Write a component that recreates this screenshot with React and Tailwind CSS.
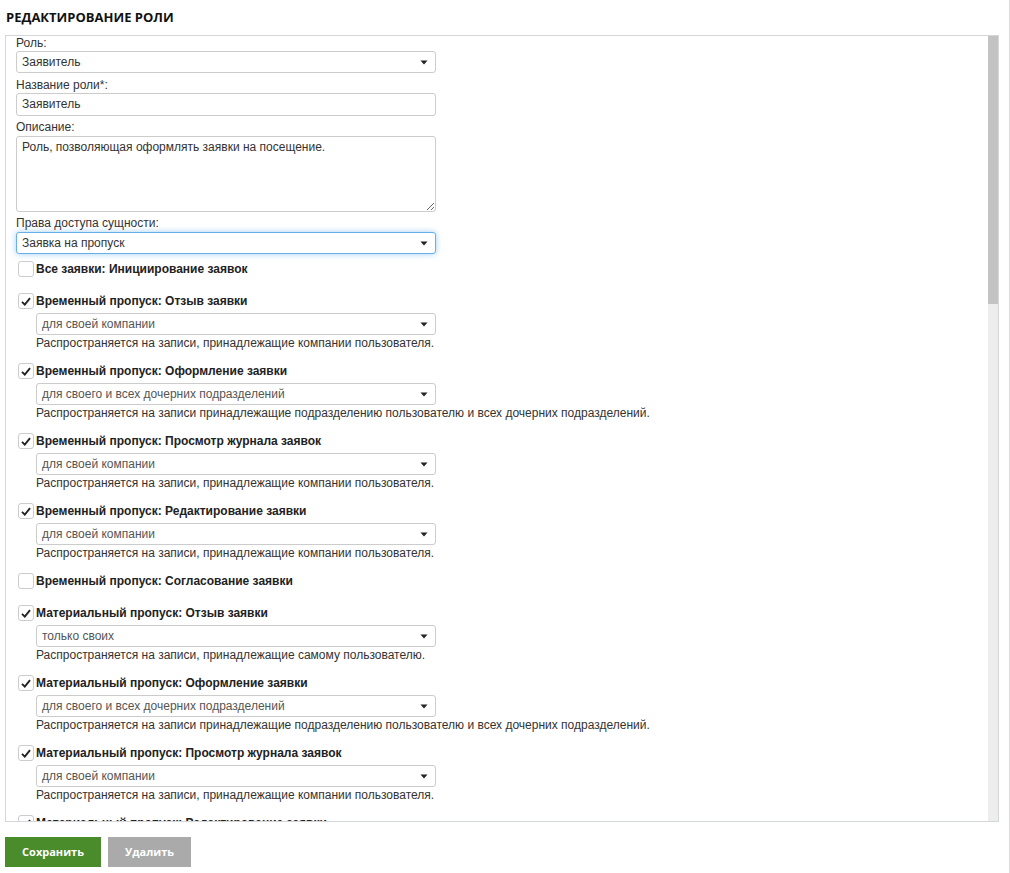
import React from 'react';

const items = [
  { title: 'Все заявки: Инициирование заявок', checked: false },
  {
    title: 'Временный пропуск: Отзыв заявки',
    checked: true,
    scope: 'для своей компании',
    hint: 'Распространяется на записи, принадлежащие компании пользователя.',
  },
  {
    title: 'Временный пропуск: Оформление заявки',
    checked: true,
    scope: 'для своего и всех дочерних подразделений',
    hint: 'Распространяется на записи принадлежащие подразделению пользователю и всех дочерних подразделений.',
  },
  {
    title: 'Временный пропуск: Просмотр журнала заявок',
    checked: true,
    scope: 'для своей компании',
    hint: 'Распространяется на записи, принадлежащие компании пользователя.',
  },
  {
    title: 'Временный пропуск: Редактирование заявки',
    checked: true,
    scope: 'для своей компании',
    hint: 'Распространяется на записи, принадлежащие компании пользователя.',
  },
  { title: 'Временный пропуск: Согласование заявки', checked: false },
  {
    title: 'Материальный пропуск: Отзыв заявки',
    checked: true,
    scope: 'только своих',
    hint: 'Распространяется на записи, принадлежащие самому пользователю.',
  },
  {
    title: 'Материальный пропуск: Оформление заявки',
    checked: true,
    scope: 'для своего и всех дочерних подразделений',
    hint: 'Распространяется на записи принадлежащие подразделению пользователю и всех дочерних подразделений.',
  },
  {
    title: 'Материальный пропуск: Просмотр журнала заявок',
    checked: true,
    scope: 'для своей компании',
    hint: 'Распространяется на записи, принадлежащие компании пользователя.',
  },
  {
    title: 'Материальный пропуск: Редактирование заявки',
    checked: true,
    scope: 'для своей компании',
    hint: 'Распространяется на записи, принадлежащие компании пользователя.',
  },
];

function Caret() {
  return (
    <svg width="8" height="5" viewBox="0 0 8 5" className="shrink-0">
      <path d="M0.5 0.5 L7.5 0.5 L4 4.5 Z" fill="#222" />
    </svg>
  );
}

function Select({ value, focused = false, className = '', textClass = 'text-[#333]' }) {
  return (
    <div
      className={`flex items-center justify-between h-[22px] pl-[5px] pr-[7px] rounded-[3px] border bg-white ${
        focused
          ? 'border-[#66afe9] shadow-[0_0_6px_rgba(102,175,233,0.6)]'
          : 'border-[#ccc]'
      } ${className}`}
    >
      <span className={`text-[12px] leading-[20px] ${textClass}`}>{value}</span>
      <Caret />
    </div>
  );
}

function Checkbox({ checked }) {
  return (
    <span className="flex items-center justify-center w-[16px] h-[16px] rounded-[3px] border border-[#ccc] bg-white shrink-0">
      {checked && (
        <svg width="10" height="9" viewBox="0 0 10 9">
          <path d="M1 4.8 L3.8 7.6 L9 1.2" fill="none" stroke="#222" strokeWidth="1.9" />
        </svg>
      )}
    </span>
  );
}

function PermissionItem({ item }) {
  return (
    <div className={item.checked ? 'mb-[10px]' : 'mb-[12px]'}>
      <div className="flex items-center h-[20px] pl-[2px] gap-[2px]">
        <Checkbox checked={item.checked} />
        <span className="text-[12px] font-bold text-[#222] whitespace-nowrap">{item.title}</span>
      </div>
      {item.checked && (
        <div className="ml-[20px]">
          <Select value={item.scope} className="w-[400px] mt-[2px]" textClass="text-[#555]" />
          <div className="text-[12px] leading-[16px] text-[#333]">{item.hint}</div>
        </div>
      )}
    </div>
  );
}

export default function App() {
  return (
    <div
      className="w-[1010px] h-[873px] bg-white border-r border-[#ddd] overflow-hidden"
      style={{ fontFamily: '"Liberation Sans", Arial, sans-serif' }}
    >
      <div className="pt-[7px] pl-[6px] mb-[8px]">
        <div className="h-[20px] text-[13px] leading-[20px] font-bold text-[#111] font-['Open_Sans',sans-serif]">
          РЕДАКТИРОВАНИЕ РОЛИ
        </div>
      </div>

      {/* панель формы со скроллом */}
      <div className="ml-[5px] w-[994px] h-[787px] border border-[#d3d7db] flex overflow-hidden">
        <div className="flex-1 overflow-hidden pl-[10px] text-[12px] text-[#333]">
          <div className="leading-[15px]">Роль:</div>
          <Select value="Заявитель" className="w-[420px]" />

          <div className="leading-[15px] mt-[5px]">Название роли*:</div>
          <div className="w-[420px] h-[23px] border border-[#ccc] rounded-[3px] pl-[5px] leading-[21px] text-[12px] text-[#333]">
            Заявитель
          </div>

          <div className="leading-[15px] mt-[4px]">Описание:</div>
          <textarea
            readOnly
            defaultValue="Роль, позволяющая оформлять заявки на посещение."
            className="block w-[420px] h-[76px] mt-[1px] border border-[#ccc] rounded-[3px] px-[5px] py-[3px] text-[12px] leading-[15px] text-[#333] resize-y outline-none"
            style={{ fontFamily: '"Liberation Sans", Arial, sans-serif' }}
          />

          <div className="leading-[15px] mt-[4px]">Права доступа сущности:</div>
          <Select value="Заявка на пропуск" focused className="w-[420px] mt-[1px]" />

          <div className="mt-[5px]">
            {items.map((item, index) => (
              <PermissionItem key={index} item={item} />
            ))}
          </div>
        </div>

        <div className="w-[10px] bg-[#ededed] shrink-0">
          <div className="h-[268px] bg-[#c3c3c3]" />
        </div>
      </div>

      <div className="flex gap-[7px] ml-[5px] mt-[15px]">
        <button className="w-[96px] h-[30px] bg-[#4a8b2c] text-white text-[11px] leading-[30px] font-bold font-['Open_Sans',sans-serif]">
          Сохранить
        </button>
        <button className="w-[83px] h-[30px] bg-[#aaaaaa] text-white text-[11px] leading-[30px] font-bold font-['Open_Sans',sans-serif]">
          Удалить
        </button>
      </div>
    </div>
  );
}
